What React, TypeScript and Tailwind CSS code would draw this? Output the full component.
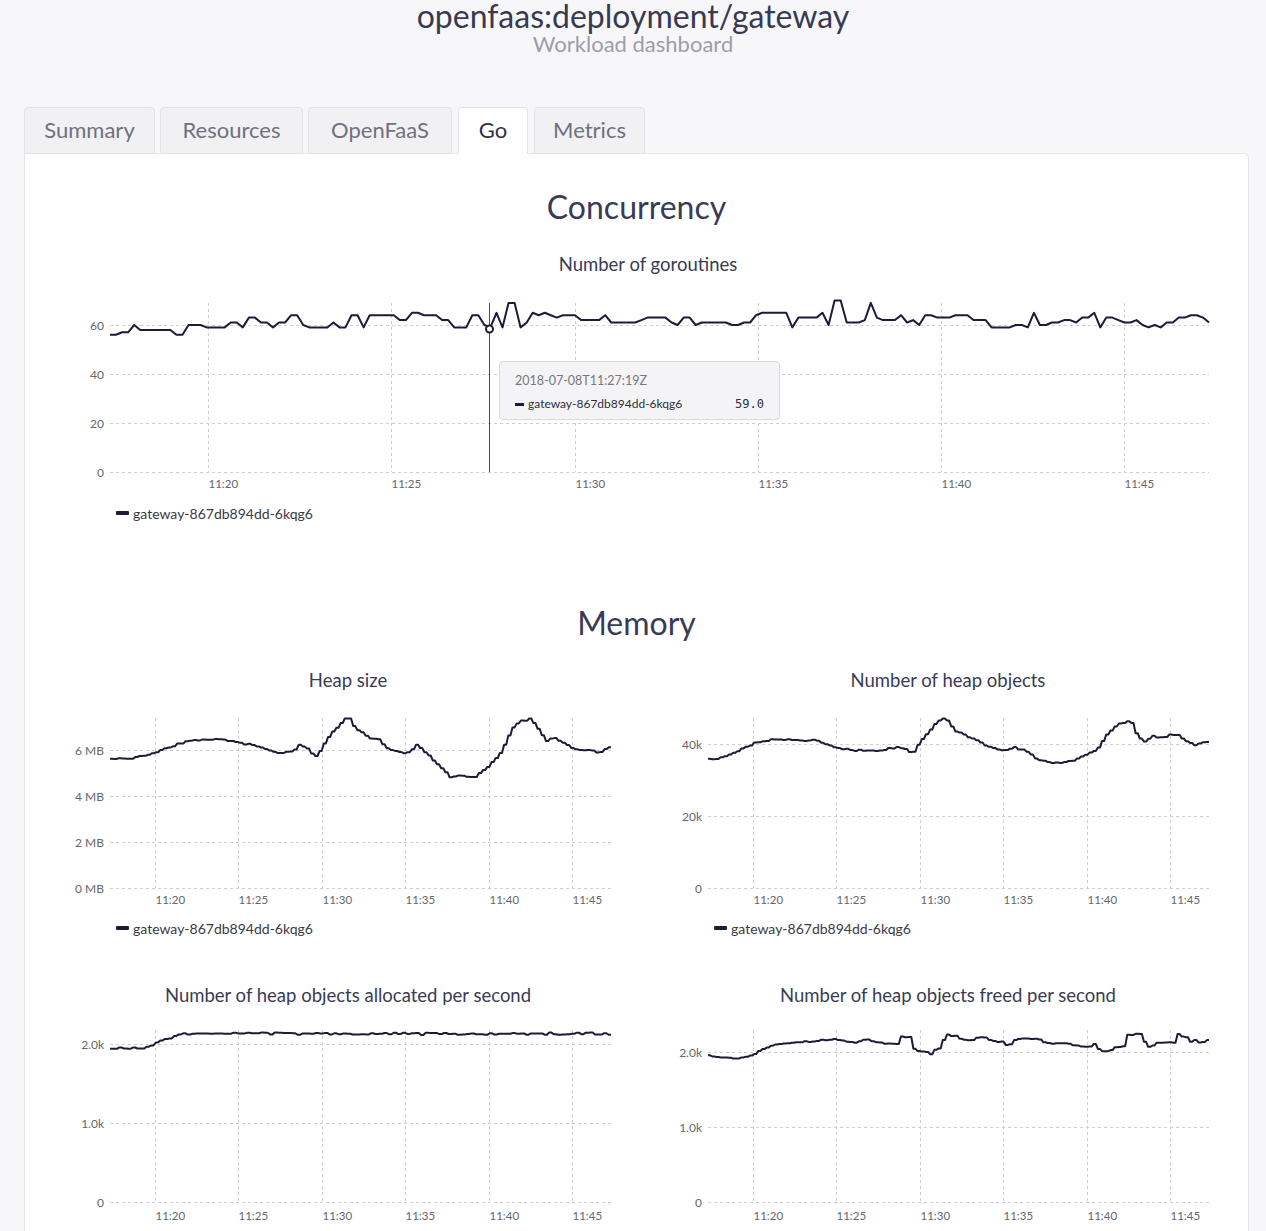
import React from "react";

function mulberry32(seed: number) {
  let a = seed;
  return function () {
    a |= 0;
    a = (a + 0x6d2b79f5) | 0;
    let t = Math.imul(a ^ (a >>> 15), 1 | a);
    t = (t + Math.imul(t ^ (t >>> 7), 61 | t)) ^ t;
    return ((t ^ (t >>> 14)) >>> 0) / 4294967296;
  };
}

function interp(keys: [number, number][], n: number, noise: number, seed: number, hold = 2): number[] {
  const r = mulberry32(seed);
  const x0 = keys[0][0];
  const x1 = keys[keys.length - 1][0];
  const out: number[] = [];
  let last = 0;
  for (let i = 0; i < n; i++) {
    const zx = x0 + (i / (n - 1)) * (x1 - x0);
    let j = 0;
    while (j < keys.length - 2 && keys[j + 1][0] < zx) j++;
    const [ax, av] = keys[j];
    const [bx, bv] = keys[j + 1];
    const t = Math.min(1, Math.max(0, (zx - ax) / (bx - ax)));
    const v = av + (bv - av) * t + (r() - 0.5) * noise;
    if (i % hold === 0) last = v;
    out.push(last);
  }
  return out;
}

function goroutines(): number[] {
  const r = mulberry32(23);
  const out: number[] = [];
  const n = 183;
  const start = [56, 56, 57, 57, 60, 58, 58, 58, 58, 58, 58, 56, 56, 60, 60, 60, 59, 59, 59, 59, 61, 61, 59, 63, 63, 61, 61, 59, 61, 61, 64, 64, 60, 59, 59, 59, 59, 61, 59, 59, 64, 64, 59, 64, 64, 64, 64, 64, 62, 62, 65, 65, 64, 64, 64, 62, 62, 59, 59, 59, 64, 64, 60, 65, 65, 59, 59, 63];
  const end = [62, 61, 61, 62, 60, 59, 60, 59, 61, 61, 63, 63, 64, 64, 63, 61];
  let v = 60;
  for (let i = 0; i < n; i++) {
    if (i < start.length) {
      v = start[i];
    } else if (i >= n - end.length) {
      v = end[i - (n - end.length)];
    } else if (r() < 0.65) {
      let nv = Math.round(59 + r() * 6.4);
      if (r() < 0.03) nv = 69;
      v = nv;
    }
    out.push(v);
  }
  out[63] = 59;
  out[66] = 69;
  out[67] = 69;
  out[120] = 70;
  out[121] = 70;
  return out;
}

const heapSize = interp(
  [
    [135, 5.6], [200, 5.65], [265, 5.9], [290, 6.05], [330, 6.3], [380, 6.45], [450, 6.45], [480, 6.35],
    [540, 6.2], [560, 6.1], [590, 5.9], [650, 5.9], [665, 6.2], [690, 6.05], [705, 5.8], [718, 5.75],
    [730, 6.1], [760, 6.8], [790, 7.3], [808, 7.4], [825, 6.9], [850, 6.7], [870, 6.5], [890, 6.45],
    [910, 6.05], [960, 5.9], [975, 5.88], [995, 6.2], [1010, 6.1], [1040, 5.6], [1070, 5.2], [1090, 4.85],
    [1160, 4.85], [1190, 5.2], [1220, 5.6], [1240, 6.1], [1270, 7.05], [1290, 7.25], [1320, 7.35],
    [1335, 7.0], [1360, 6.4], [1385, 6.55], [1400, 6.35], [1440, 6.05], [1490, 5.95], [1510, 5.9],
    [1530, 6.05], [1545, 6.2],
  ],
  240, 0.08, 3
);

const heapObjects = interp(
  [
    [135, 35.8], [180, 36.3], [230, 38.6], [270, 40.5], [330, 41.4], [400, 40.9], [445, 41.0], [470, 39.5],
    [520, 38.6], [570, 38.1], [600, 37.9], [660, 39.1], [690, 38.7], [710, 37.2], [730, 40.5], [760, 44.2],
    [790, 47], [805, 46.8], [830, 43.7], [860, 42.3], [890, 40.9], [930, 39.1], [960, 38.1], [990, 39.1],
    [1020, 38.4], [1060, 35.8], [1090, 34.9], [1130, 34.7], [1170, 35.8], [1200, 37.2], [1230, 38.6],
    [1250, 41.9], [1280, 45.1], [1310, 46], [1320, 47], [1345, 41.9], [1360, 40.5], [1380, 42.1],
    [1410, 41.9], [1430, 42.3], [1450, 42.8], [1475, 40.9], [1510, 39.7], [1520, 40.5], [1545, 40.5],
  ],
  240, 0.5, 5
);

const allocated = interp(
  [
    [135, 1.95], [230, 1.95], [250, 1.98], [280, 2.04], [300, 2.08], [320, 2.12], [360, 2.13], [1545, 2.13],
  ],
  220, 0.03, 9
);

const freed = interp(
  [
    [135, 1.955], [175, 1.93], [215, 1.91], [240, 1.94], [260, 1.96], [290, 2.05], [320, 2.1], [370, 2.13],
    [420, 2.14], [470, 2.165], [490, 2.18], [510, 2.15], [550, 2.12], [570, 2.16], [580, 2.17], [600, 2.14],
    [640, 2.11], [665, 2.1], [675, 2.2], [705, 2.2], [715, 2.01], [745, 2.01], [758, 1.955], [765, 2.02],
    [790, 2.05], [800, 2.23], [835, 2.21], [850, 2.16], [880, 2.16], [885, 2.19], [915, 2.19], [940, 2.14],
    [960, 2.14], [970, 2.1], [990, 2.1], [1000, 2.18], [1070, 2.17], [1080, 2.12], [1150, 2.11], [1180, 2.07],
    [1210, 2.07], [1225, 2.13], [1235, 2.0], [1255, 2.01], [1270, 2.03], [1280, 2.07], [1305, 2.07],
    [1310, 2.22], [1350, 2.245], [1370, 2.07], [1390, 2.1], [1400, 2.13], [1445, 2.13], [1453, 2.25],
    [1465, 2.2], [1480, 2.19], [1490, 2.14], [1505, 2.17], [1515, 2.13], [1530, 2.14], [1545, 2.16],
  ],
  240, 0.015, 13
);

const XT = [0, 1, 2, 3, 4, 5].map((i) => ({ f: 0.08943 + i / 6, label: `11:${20 + i * 5}` }));

type Tick = { v: number; label: string };

function Chart(props: {
  w: number;
  h: number;
  pl: number;
  pr: number;
  pt: number;
  pb: number;
  ticks: Tick[];
  scale: number;
  data: number[];
  labelY: number;
  children?: React.ReactNode;
}) {
  const { w, h, pl, pr, pt, pb, ticks, scale, data, labelY, children } = props;
  const y = (v: number) => pb - v * scale;
  const pts = data
    .map((v, i) => `${(pl + (i / (data.length - 1)) * (pr - pl)).toFixed(1)},${y(v).toFixed(1)}`)
    .join(" ");
  return (
    <svg width={w} height={h} className="block">
      {ticks.map((t) => {
        const yy = Math.round(y(t.v)) + 0.5;
        return (
          <g key={t.label}>
            <line x1={pl} x2={pr} y1={yy} y2={yy} stroke="#cfcfd3" strokeDasharray="3 3" strokeWidth={1} />
            <text x={pl - 6} y={yy + 4} textAnchor="end" fontSize={12} fill="#66666d">
              {t.label}
            </text>
          </g>
        );
      })}
      {XT.map((t) => {
        const x = Math.round(pl + t.f * (pr - pl)) + 0.5;
        return (
          <g key={t.label}>
            <line x1={x} x2={x} y1={pt} y2={pb} stroke="#cfcfd3" strokeDasharray="3 3" strokeWidth={1} />
            <text x={x} y={labelY} fontSize={11.5} fill="#66666d">
              {t.label}
            </text>
          </g>
        );
      })}
      <polyline points={pts} fill="none" stroke="#1c1b3a" strokeWidth={2} strokeLinejoin="round" />
      {children}
    </svg>
  );
}

function Legend({ pl }: { pl: string }) {
  return (
    <div className={`mt-[8px] flex h-[20px] items-center ${pl}`}>
      <span className="h-[4px] w-[13px] rounded-[1px] bg-[#1c1b3a]" />
      <span className="ml-[4px] text-[14px] text-[#3a3a48]">gateway-867db894dd-6kqg6</span>
    </div>
  );
}

const tabs = [
  { label: "Summary", cls: "w-[131px]" },
  { label: "Resources", cls: "ml-[5px] w-[143px]" },
  { label: "OpenFaaS", cls: "ml-[5px] w-[144px]" },
  { label: "Go", cls: "ml-[6px] w-[70px]", active: true },
  { label: "Metrics", cls: "ml-[6px] w-[111px]" },
];

export default function App() {
  const g = goroutines();
  return (
    <div className="min-h-screen bg-[#f7f7f9] font-['Lato',sans-serif] text-[#393b54]">
      <header className="text-center">
        <h1 className="text-[32px] leading-[31px] text-[#383a52]">openfaas:deployment/gateway</h1>
        <p className="mt-[1px] text-[22px] leading-[24px] text-[#9d9dac]">Workload dashboard</p>
      </header>

      <div className="ml-6 mr-[17px] mt-[51px]">
        <div className="relative z-10 flex items-end">
          {tabs.map((t) => (
            <div
              key={t.label}
              className={`${t.cls} -mb-px flex h-[47px] items-center justify-center rounded-t-[4px] border border-[#e2e2e9] pb-[3px] text-[22px] ${
                t.active ? "border-b-white bg-white text-[#2f3044]" : "bg-[#f1f1f3] text-[#70707f]"
              }`}
            >
              {t.label}
            </div>
          ))}
        </div>

        <div className="rounded-tr-[4px] border border-[#e3e3ea] bg-white pb-10">
          <h2 className="mt-[33px] text-center text-[32px] leading-[40px]">Concurrency</h2>

          <div className="ml-[23px] w-[1200px]">
            <h3 className="mt-[25px] text-center text-[18.5px] leading-[24px]">Number of goroutines</h3>
            <div className="relative mt-[14px]">
              <Chart
                w={1200}
                h={205}
                pl={62}
                pr={1161}
                pt={13}
                pb={182}
                ticks={[
                  { v: 0, label: "0" },
                  { v: 20, label: "20" },
                  { v: 40, label: "40" },
                  { v: 60, label: "60" },
                ]}
                scale={2.45}
                data={g}
                labelY={198}
              >
                <line x1={441.5} x2={441.5} y1={13} y2={182} stroke="#4a4a52" strokeWidth={1} />
                <circle cx={441.5} cy={39} r={3.5} fill="#fff" stroke="#1c1b3a" strokeWidth={2} />
              </Chart>
              <div className="absolute left-[451px] top-[71px] h-[59px] w-[281px] rounded-[4px] border border-[#d9d9df] bg-[#f4f4f6] px-[15px] pt-[10px]">
                <div className="text-[12.5px] leading-[18px] text-[#76767e]">2018-07-08T11:27:19Z</div>
                <div className="mt-[5px] flex h-[18px] items-center">
                  <span className="h-[3px] w-[9px] bg-[#1c1b3a]" />
                  <span className="ml-[4px] text-[12px] text-[#2e2e3c]">gateway-867db894dd-6kqg6</span>
                  <span className="ml-auto font-['DejaVu_Sans_Mono',monospace] text-[12px] text-[#2e2e3c]">
                    59.0
                  </span>
                </div>
              </div>
            </div>
            <Legend pl="pl-[68px]" />
          </div>

          <h2 className="mt-[80px] text-center text-[32px] leading-[40px]">Memory</h2>

          <div className="ml-[23px] grid w-[1200px] grid-cols-2">
            <div>
              <h3 className="mt-[25px] text-center text-[18.5px] leading-[24px]">Heap size</h3>
              <div className="mt-[13px]">
                <Chart
                  w={600}
                  h={205}
                  pl={62}
                  pr={563}
                  pt={13}
                  pb={183}
                  ticks={[
                    { v: 0, label: "0 MB" },
                    { v: 2, label: "2 MB" },
                    { v: 4, label: "4 MB" },
                    { v: 6, label: "6 MB" },
                  ]}
                  scale={23}
                  data={heapSize}
                  labelY={199}
                />
              </div>
              <Legend pl="pl-[68px]" />
            </div>
            <div>
              <h3 className="mt-[25px] text-center text-[18.5px] leading-[24px]">Number of heap objects</h3>
              <div className="mt-[13px]">
                <Chart
                  w={600}
                  h={205}
                  pl={60}
                  pr={561}
                  pt={13}
                  pb={183}
                  ticks={[
                    { v: 0, label: "0" },
                    { v: 20, label: "20k" },
                    { v: 40, label: "40k" },
                  ]}
                  scale={3.6}
                  data={heapObjects}
                  labelY={199}
                />
              </div>
              <Legend pl="pl-[66px]" />
            </div>

            <div>
              <h3 className="mt-[45px] text-center text-[18.5px] leading-[24px]">
                Number of heap objects allocated per second
              </h3>
              <div className="mt-[10px]">
                <Chart
                  w={600}
                  h={215}
                  pl={62}
                  pr={563}
                  pt={13}
                  pb={185}
                  ticks={[
                    { v: 0, label: "0" },
                    { v: 1, label: "1.0k" },
                    { v: 2, label: "2.0k" },
                  ]}
                  scale={79}
                  data={allocated}
                  labelY={203}
                />
              </div>
            </div>
            <div>
              <h3 className="mt-[45px] text-center text-[18.5px] leading-[24px]">
                Number of heap objects freed per second
              </h3>
              <div className="mt-[10px]">
                <Chart
                  w={600}
                  h={215}
                  pl={60}
                  pr={561}
                  pt={13}
                  pb={185}
                  ticks={[
                    { v: 0, label: "0" },
                    { v: 1, label: "1.0k" },
                    { v: 2, label: "2.0k" },
                  ]}
                  scale={75}
                  data={freed}
                  labelY={203}
                />
              </div>
            </div>
          </div>
        </div>
      </div>
    </div>
  );
}
